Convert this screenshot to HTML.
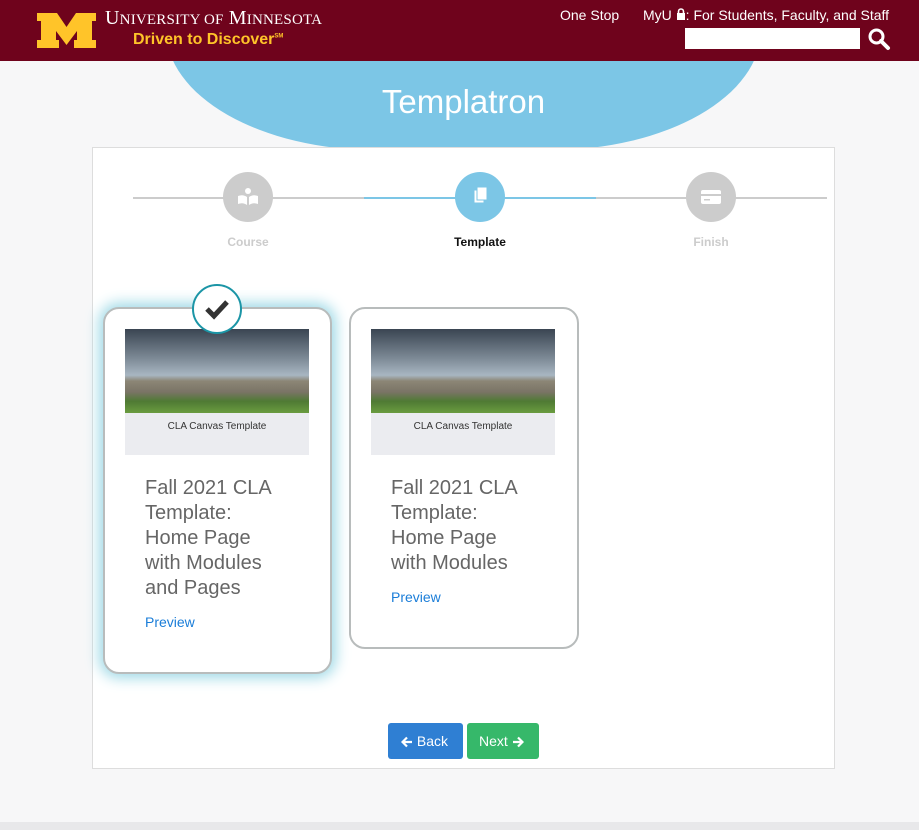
<!DOCTYPE html>
<html><head><meta charset="utf-8"><style>
*{margin:0;padding:0;box-sizing:border-box}
body{width:919px;height:830px;background:#f7f7f8;font-family:"Liberation Sans",sans-serif;position:relative;overflow:hidden}
.hdr{position:absolute;left:0;top:0;width:919px;height:61px;background:#6f031c}
.blob{position:absolute;left:166px;top:-100px;width:595px;height:250px;border-radius:0 0 210px 210px/0 0 120px 120px;background:#7cc6e6}
.title{position:absolute;left:166px;top:83px;width:595px;text-align:center;color:#fff;font-size:33px}
.panel{position:absolute;left:92px;top:147px;width:743px;height:622px;background:#fff;border:1px solid #ddd}
.line{position:absolute;top:197px;height:2px}
.circ{position:absolute;top:172px;width:50px;height:50px;border-radius:50%}
.lbl{position:absolute;top:235px;width:120px;text-align:center;font-size:12px;font-weight:bold}
.card{position:absolute;background:#fff;border:2px solid #b8bcbc;border-radius:16px}
.img{position:absolute;width:184px;height:84px;background:linear-gradient(#3a4552 0%,#7d8a96 35%,#a8b6c2 55%,#8c8676 62%,#7a7466 75%,#4f7a34 86%,#6a9c3f 100%)}
.cap{position:absolute;width:184px;height:42px;background:#ebecf0;font-size:10px;text-align:center;padding-top:8px;color:#333}
.ct{position:absolute;font-size:20px;color:#666;line-height:25px}
.pv{position:absolute;font-size:14px;color:#1a7dd8}
.btn{position:absolute;top:723px;height:36px;border-radius:3px;color:#fff;font-size:14px;line-height:36px}
.btn svg{vertical-align:-2px}
</style></head><body>
<div class="blob"></div>
<div class="hdr">
<svg style="position:absolute;left:37px;top:13px" width="59" height="35" viewBox="0 0 59 35"><path d="M0 0H20L29.5 14L39 0H59V8H55V27H59V35H37V27H40V18L29.5 32L19 18V27H22V35H0V27H4V8H0Z" fill="#ffc429"/></svg>
<div style="position:absolute;left:105px;top:7px;color:#fff;font-family:'Liberation Serif',serif;font-size:20px;letter-spacing:.2px">U<span style="font-size:15px">NIVERSITY OF</span> M<span style="font-size:15px">INNESOTA</span></div>
<div style="position:absolute;left:133px;top:31px;color:#ffc429;font-size:16px;font-weight:bold">Driven to Discover<sup style="font-size:6px">SM</sup></div>
<div style="position:absolute;left:560px;top:7px;color:#fff;font-size:14px">One Stop</div>
<div style="position:absolute;left:643px;top:7px;color:#fff;font-size:14px">MyU <svg width="10" height="12" viewBox="0 0 10 12"><path d="M2.5 5V3.5a2.5 2.5 0 0 1 5 0V5" stroke="#fff" stroke-width="1.6" fill="none"/><rect x="1" y="5" width="8" height="7" fill="#fff"/></svg>: For Students, Faculty, and Staff</div>
<div style="position:absolute;left:685px;top:28px;width:175px;height:21px;background:#fff"></div>
<svg style="position:absolute;left:867px;top:27px" width="24" height="24" viewBox="0 0 24 24"><circle cx="9.5" cy="9.5" r="6.5" stroke="#fff" stroke-width="3" fill="none"/><path d="M14 14L21 21" stroke="#fff" stroke-width="4" stroke-linecap="round"/></svg>
</div>
<div class="title">Templatron</div>
<div class="panel"></div>
<div class="line" style="left:133px;width:231px;background:#ccc"></div>
<div class="line" style="left:364px;width:232px;background:#7cc6e6"></div>
<div class="line" style="left:596px;width:231px;background:#ccc"></div>
<div class="circ" style="left:223px;background:#ccc"><svg width="50" height="50"><circle cx="25" cy="19" r="3" fill="#fff"/><path d="M15 24Q20 22 24 25V33Q20 30 15 32ZM35 24Q30 22 26 25V33Q30 30 35 32Z" fill="#fff"/></svg></div>
<div class="circ" style="left:455px;background:#7cc6e6"><svg width="50" height="50"><rect x="19" y="18" width="10" height="13" fill="#fff" stroke="#7cc6e6"/><rect x="22" y="15" width="10" height="13" fill="#fff" stroke="#7cc6e6"/></svg></div>
<div class="circ" style="left:686px;background:#ccc"><svg width="50" height="50"><rect x="15" y="18" width="20" height="14" rx="2" fill="#fff"/><rect x="15" y="22" width="20" height="2" fill="#ccc"/><rect x="18" y="27" width="6" height="1.5" fill="#ccc"/></svg></div>
<div class="lbl" style="left:188px;color:#ccc">Course</div>
<div class="lbl" style="left:420px;color:#111">Template</div>
<div class="lbl" style="left:651px;color:#ccc">Finish</div>

<div class="card" style="left:103px;top:307px;width:229px;height:367px;box-shadow:0 0 14px 4px #9fd9e6"></div>
<div class="img" style="left:125px;top:329px"></div>
<div class="cap" style="left:125px;top:413px">CLA Canvas Template</div>
<div class="ct" style="left:145px;top:476px">Fall 2021 CLA<br>Template:<br>Home Page<br>with Modules<br>and Pages</div>
<div class="pv" style="left:145px;top:614px">Preview</div>
<div style="position:absolute;left:192px;top:284px;width:50px;height:50px;border-radius:50%;background:#fff;border:2px solid #1b95a6"><svg width="46" height="46"><path d="M13 23L20 30L33 16" stroke="#333" stroke-width="5" fill="none"/></svg></div>

<div class="card" style="left:349px;top:307px;width:230px;height:342px"></div>
<div class="img" style="left:371px;top:329px"></div>
<div class="cap" style="left:371px;top:413px">CLA Canvas Template</div>
<div class="ct" style="left:391px;top:476px">Fall 2021 CLA<br>Template:<br>Home Page<br>with Modules</div>
<div class="pv" style="left:391px;top:589px">Preview</div>

<div class="btn" style="left:388px;width:75px;background:#2f7fd3;padding-left:13px"><svg width="12" height="12" viewBox="0 0 12 12"><path d="M11 6H2M6 1.5L1.5 6L6 10.5" stroke="#fff" stroke-width="2.2" fill="none"/></svg> Back</div>
<div class="btn" style="left:467px;width:72px;background:#36b86a;padding-left:12px">Next <svg width="12" height="12" viewBox="0 0 12 12"><path d="M1 6H10M6 1.5L10.5 6L6 10.5" stroke="#fff" stroke-width="2.2" fill="none"/></svg></div>
<div style="position:absolute;left:0;top:822px;width:919px;height:8px;background:#e8e8ea"></div>
</body></html>
